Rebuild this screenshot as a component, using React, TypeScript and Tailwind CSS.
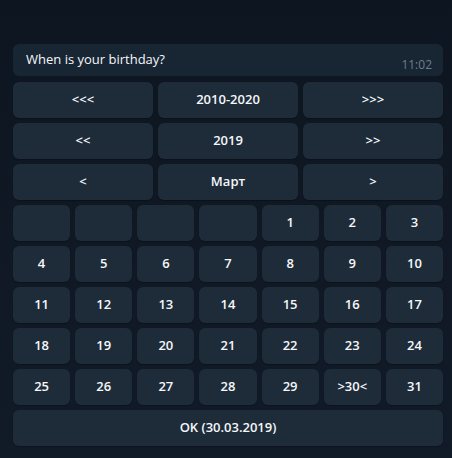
const days: (number | null)[] = [
  null, null, null, null, 1, 2, 3,
  4, 5, 6, 7, 8, 9, 10,
  11, 12, 13, 14, 15, 16, 17,
  18, 19, 20, 21, 22, 23, 24,
  25, 26, 27, 28, 29, 30, 31,
];

const selectedDay = 30;

function KeyButton({ label }: { label?: string }) {
  return (
    <button className="h-9 rounded-md bg-[#1e2c3a] text-[13px] font-semibold text-[#f5f7f9] shadow-[0_1px_1px_rgba(0,0,0,0.25)]">
      {label}
    </button>
  );
}

export default function App() {
  const navRows = [
    ["<<<", "2010-2020", ">>>"],
    ["<<", "2019", ">>"],
    ["<", "Март", ">"],
  ];

  return (
    <div
      className="h-[458px] w-[452px] bg-gradient-to-b from-[#0d1520] to-[#111b27] px-[13px] pt-[44px]"
      style={{ fontFamily: '"Open Sans", "Noto Sans", sans-serif' }}
    >
      <div className="w-[430px]">
        <div className="relative h-8 rounded-md bg-[#182533] pl-[13px] pt-[6px] text-[13px] text-[#f5f7f9]">
          When is your birthday?
          <span className="absolute right-[11px] bottom-[2px] text-[12px] text-[#6d7f8f]">11:02</span>
        </div>

        <div className="mt-[6px] flex flex-col gap-[5px]">
          {navRows.map((row, i) => (
            <div key={i} className="grid grid-cols-3 gap-[5px]">
              {row.map((label) => (
                <KeyButton key={label} label={label} />
              ))}
            </div>
          ))}

          <div className="grid grid-cols-7 gap-x-[5px] gap-y-[5px]">
            {days.map((d, i) => (
              <KeyButton
                key={i}
                label={d === null ? undefined : d === selectedDay ? `>${d}<` : String(d)}
              />
            ))}
          </div>

          <KeyButton label="OK (30.03.2019)" />
        </div>
      </div>
    </div>
  );
}
